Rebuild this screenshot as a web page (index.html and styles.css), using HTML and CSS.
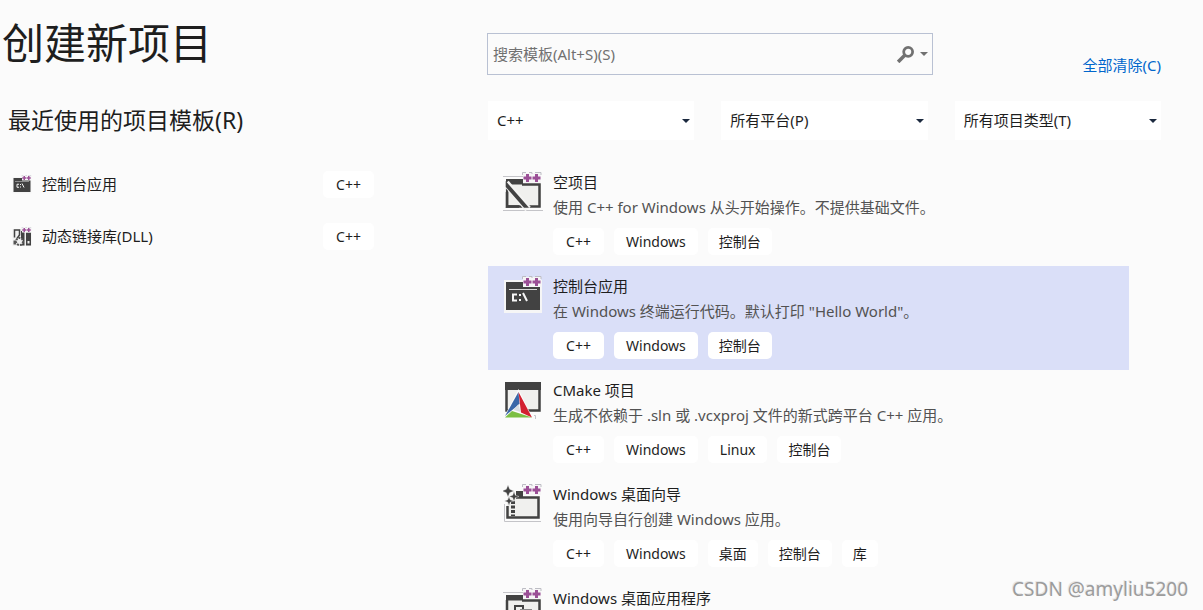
FILE: index.html
```html
<!DOCTYPE html>
<html lang="zh-CN">
<head>
<meta charset="utf-8">
<title>创建新项目</title>
<link rel="stylesheet" href="styles.css">
</head>
<body>
<svg class="defs" aria-hidden="true">
  <symbol id="plusplus" viewBox="0 0 20 12">
    <path fill="#f6f5f6" d="M1 1h18v10H1z"/>
    <path fill="none" stroke="#bdbdc4" d="M.5 3V.5H4M7 .5h3V2M13 .5h6V3"/>
    <path fill="#9b4f96" d="M4 2h3v2.500h2.500v3H7V10H4V7.500H1.500v-3H4zM13 2h3v2.500h2.500v3H16V10h-3V7.500h-2.500v-3H13z"/>
  </symbol>
  <symbol id="caret" viewBox="0 0 8 4"><path fill="currentColor" d="M0 0h8L4 4z"/></symbol>
  <symbol id="console" viewBox="0 0 40 40">
    <path fill="#f6f6f6" d="M1 4h38v33H1z"/>
    <path fill="#424242" d="M3 6h34v28H3z"/>
    <path fill="#d8d8d8" d="M6 13h28v1H6z"/>
    <path fill="none" stroke="#f6f6f6" stroke-width="2" d="M14 18.500h-4v6h4M17 18v2M17 23v2M20 17l4 8"/>
    <use href="#plusplus" x="19" y="0" width="20" height="12"/>
  </symbol>
</svg>
<main class="page">
  <section class="recent">
    <h1>创建新项目</h1>
    <h2>最近使用的项目模板(R)</h2>
    <ul class="recent-list">
      <li>
        <svg class="small-icon" viewBox="0 0 40 40"><use href="#console"/></svg>
        <span class="recent-name">控制台应用</span><span class="tag latin">C++</span>
      </li>
      <li>
        <svg class="small-icon" viewBox="0 0 40 40">
          <path fill="#f0f0f0" d="M1 4h38v34H1z"/>
          <path fill="none" stroke="#424242" stroke-width="3" d="M5 21V6h10v10l-5 7"/>
          <path fill="#424242" d="M18 8h7v29h-7zM28 11h10v26H28z"/>
          <path fill="#f0f0f0" d="M31 28h4v5h-4z"/>
          <circle cx="15" cy="29" r="7" fill="#f0f0f0" stroke="#555" stroke-width="4" stroke-dasharray="4 2"/>
          <path fill="#555" d="M3 27h5v8H3z"/>
          <use href="#plusplus" x="19" y="0" width="20" height="12"/>
        </svg>
        <span class="recent-name">动态链接库(DLL)</span><span class="tag latin">C++</span>
      </li>
    </ul>
  </section>

  <section class="browse">
    <div class="search-row">
      <div class="search">
        <input type="text" aria-label="搜索模板" placeholder="搜索模板(Alt+S)(S)">
        <button class="search-button" type="button" aria-label="搜索">
          <svg class="magnifier" viewBox="0 0 16 16"><circle cx="10.500" cy="5.500" r="4.200" fill="none" stroke="#717171" stroke-width="2.600"/><path stroke="#717171" stroke-width="3.400" d="M8 8l-7 7"/></svg>
          <svg class="caret"><use href="#caret"/></svg>
        </button>
      </div>
      <a class="clear" href="#">全部清除(C)</a>
    </div>
    <div class="filters">
      <div class="filter"><select aria-label="语言"><option>C++</option></select><svg class="caret"><use href="#caret"/></svg></div>
      <div class="filter"><select aria-label="平台"><option>所有平台(P)</option></select><svg class="caret"><use href="#caret"/></svg></div>
      <div class="filter"><select aria-label="项目类型"><option>所有项目类型(T)</option></select><svg class="caret"><use href="#caret"/></svg></div>
    </div>
    <ul class="templates">
      <li class="template">
        <svg class="icon" viewBox="0 0 40 40">
          <path stroke="#c4c4c8" d="M0 4.500h20M0 38.500h40"/>
          <path fill="#f0f0ee" d="M3 12h35v23H3z"/>
          <path fill="#424242" d="M3 7h17v5.500H3z"/>
          <path fill="none" stroke="#424242" stroke-width="2.500" d="M4 12v22.500h32.500V12.500H19"/>
          <path stroke="#f4f4f3" stroke-width="7" d="M3 11l22 26"/>
          <path fill="#fbfbfb" d="M0 5h2.700v30H0z"/>
          <path fill="#424242" d="M2.700 9L26 35.700h-5L2.700 15z"/>
          <path fill="none" stroke="#424242" stroke-width="2.500" d="M4 20v14.500h12"/>
          <use href="#plusplus" x="19" y="0" width="20" height="12"/>
        </svg>
        <div class="info">
          <h3>空项目</h3>
          <p>使用 C++ for Windows 从头开始操作。不提供基础文件。</p>
          <div class="tags"><span class="tag latin">C++</span><span class="tag latin">Windows</span><span class="tag">控制台</span></div>
        </div>
      </li>
      <li class="template selected">
        <svg class="icon" viewBox="0 0 40 40"><use href="#console"/></svg>
        <div class="info">
          <h3>控制台应用</h3>
          <p>在 Windows 终端运行代码。默认打印 "Hello World"。</p>
          <div class="tags"><span class="tag latin">C++</span><span class="tag latin">Windows</span><span class="tag">控制台</span></div>
        </div>
      </li>
      <li class="template">
        <svg class="icon" viewBox="0 0 40 40">
          <path fill="#f0f0ee" d="M3 3h34v29H3z"/>
          <path fill="#424242" d="M2 2h36v8H2z"/>
          <path fill="none" stroke="#424242" stroke-width="2.500" d="M3.500 8v22.500h33V8"/>
          <path fill="#fbfbfb" d="M15.500 9L30 39H0z"/>
          <path fill="#3a67a8" d="M15.500 12l1 12L2 36z"/>
          <path fill="#d32030" d="M15.500 12L29 37.500l-11-5z"/>
          <path fill="#7bbf43" d="M9 31l20 6.500H2z"/>
          <path fill="#d9dde2" d="M15.500 24l2 8-7-2z"/>
          <path fill="none" stroke="#c4c4c8" d="M31 35.500h1.500V39"/>
        </svg>
        <div class="info">
          <h3>CMake 项目</h3>
          <p>生成不依赖于 .sln 或 .vcxproj 文件的新式跨平台 C++ 应用。</p>
          <div class="tags"><span class="tag latin">C++</span><span class="tag latin">Windows</span><span class="tag latin">Linux</span><span class="tag">控制台</span></div>
        </div>
      </li>
      <li class="template">
        <svg class="icon" viewBox="0 0 40 40">
          <path fill="none" stroke="#c4c4c8" d="M1.500 20v17.500H38"/>
          <path fill="#f0f0ee" d="M4 14h32v20H4z"/>
          <path fill="#424242" d="M13 7h7v6h-7z"/>
          <path fill="none" stroke="#424242" stroke-width="2.500" d="M13 13.500h22.500v20h-31V22"/>
          <path fill="none" stroke="#424242" stroke-width="4" stroke-dasharray="3 1.500" d="M10 17v15"/>
          <path fill="#424242" stroke="#fbfbfb" stroke-width=".4" d="M5 1l1.700 4.300L11 7 6.700 8.700 5 13 3.300 8.700-1 7l4.300-1.700zM11 7.500l1.300 3.700 3.700 1.300-3.700 1.300L11 17.500l-1.300-3.700L6 12.500l3.700-1.300zM6 12.500l1.200 3.300 3.300 1.200-3.300 1.200L6 21.500l-1.200-3.300L1.500 17l3.300-1.200z"/>
          <use href="#plusplus" x="19" y="0" width="20" height="12"/>
        </svg>
        <div class="info">
          <h3>Windows 桌面向导</h3>
          <p>使用向导自行创建 Windows 应用。</p>
          <div class="tags"><span class="tag latin">C++</span><span class="tag latin">Windows</span><span class="tag">桌面</span><span class="tag">控制台</span><span class="tag">库</span></div>
        </div>
      </li>
      <li class="template">
        <svg class="icon" viewBox="0 0 40 40">
          <path stroke="#c4c4c8" d="M0 4.500h20"/>
          <path fill="#f0f0ee" d="M3 12h35v23H3z"/>
          <path fill="#424242" d="M3 7h17v5.500H3z"/>
          <path fill="none" stroke="#424242" stroke-width="2.500" d="M4 12v22.500h32.500V12.500H19"/>
          <path fill="none" stroke="#424242" stroke-width="2" d="M12 28V18h8v3"/>
          <path fill="none" stroke="#8a8a8a" stroke-width="2" d="M18 28v-6h10v6"/>
          <use href="#plusplus" x="19" y="0" width="20" height="12"/>
        </svg>
        <div class="info"><h3>Windows 桌面应用程序</h3></div>
      </li>
    </ul>
  </section>
</main>
<div class="watermark">CSDN @amyliu5200</div>
</body>
</html>
```
FILE: styles.css
```css
* { box-sizing: border-box; }
body {
  margin: 0;
  height: 100vh;
  overflow: hidden;
  background: #fbfbfb;
  color: #1e1e1e;
  font: 15px/25px "Noto Sans", "Noto Sans CJK SC", sans-serif;
}
h1, h2, h3, p, ul { margin: 0; padding: 0; font-weight: 400; }
ul { list-style: none; }
.defs { display: none; }
.page { display: grid; grid-template-columns: 488px minmax(0, 1fr); height: 100%; }

.recent { padding-top: 13px; }
h1 { padding-left: 2px; font-size: 42px; line-height: 60px; }
h2 { margin-top: 27px; padding-left: 8px; font-size: 23px; line-height: 40px; }
.recent-list { display: grid; gap: 25px; width: 374px; margin-top: 31px; padding-left: 12px; }
.recent-list li { display: flex; align-items: center; }
.small-icon { width: 20px; height: 20px; margin-right: 10px; }
.recent-name { flex: 1; }

.tag {
  display: block;
  padding: 0 11px;
  border-radius: 5px;
  background: #fff;
  font-size: 14px;
  line-height: 27px;
  text-align: center;
}
.latin { min-width: 51px; padding: 0 12px; }

.browse { min-height: 0; overflow: hidden; padding: 33px 42px 0 0; margin-left: -1px; }
.search-row { display: flex; align-items: flex-start; justify-content: space-between; }
.search { display: flex; width: 446px; height: 42px; border: 1px solid #b9c1d3; }
.search input {
  flex: 1;
  min-width: 0;
  padding: 0 5px;
  border: 0;
  background: none;
  color: #1e1e1e;
  font: inherit;
}
.search input::placeholder { color: #717171; opacity: 1; }
.search-button { display: flex; align-items: center; gap: 6px; padding: 0 4px; border: 0; background: none; color: #717171; }
.magnifier { width: 17px; height: 17px; }
.caret { width: 8px; height: 4px; pointer-events: none; }
.clear { margin-top: 20px; color: #0066cc; text-decoration: none; }

.filters { display: grid; grid-template-columns: repeat(3, 1fr); gap: 27px; margin: 23px 0 0 1px; }
.filter { display: grid; align-items: center; background: #fff; color: #1b293e; }
.filter > * { grid-area: 1 / 1; }
.filter select {
  appearance: none;
  width: 100%;
  height: 39px;
  padding: 0 24px 0 9px;
  border: 0;
  border-radius: 0;
  background: none;
  color: #1e1e1e;
  font: inherit;
}
.filter .caret { justify-self: end; margin-right: 4px; }

.templates { margin: 22px 32px 0 1px; }
.template { display: flex; gap: 10px; padding: 8px 15px 11px; }
.selected { background: #dadff8; }
.icon { flex: none; width: 40px; height: 40px; margin-top: 2px; }
h3 { font-size: 15px; }
.info p { color: #525252; }
.tags { display: flex; gap: 10px; margin-top: 8px; }

.watermark {
  position: absolute;
  right: 15px;
  bottom: 8px;
  color: #9c9c9c;
  font-size: 19px;
  line-height: 26px;
  text-shadow: -1px -1px 0 #e6e6e6;
}
```
